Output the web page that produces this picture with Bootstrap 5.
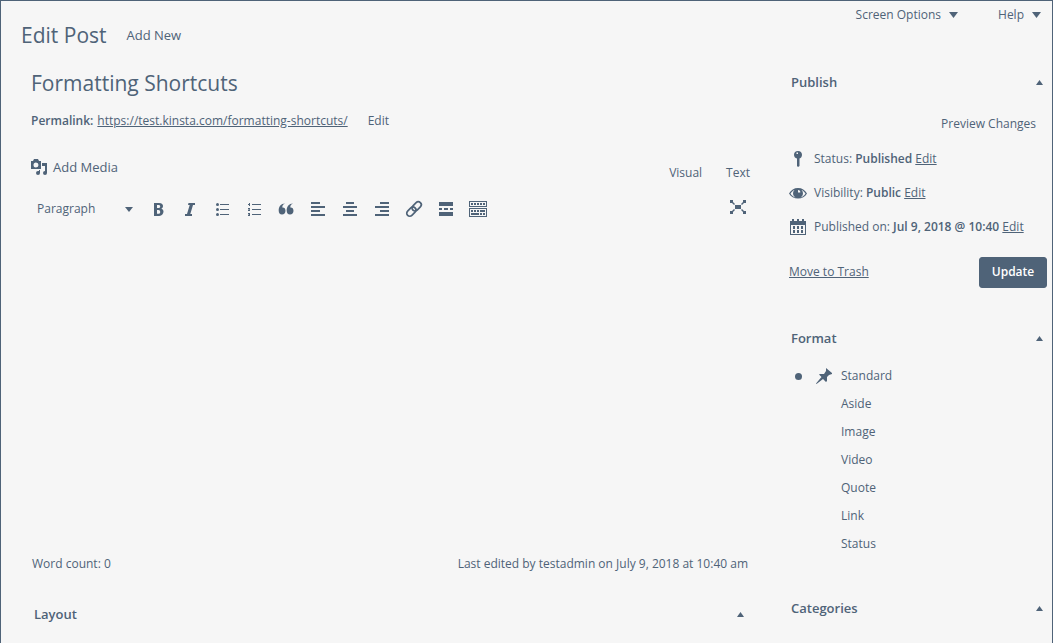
<!DOCTYPE html>
<html lang="en">
<head>
<meta charset="utf-8">
<meta name="viewport" content="width=device-width, initial-scale=1">
<title>Edit Post</title>
<link href="https://cdn.jsdelivr.net/npm/bootstrap@5.3.0/dist/css/bootstrap.min.css" rel="stylesheet">
<style>
  :root { --ink: #4f6378; --paper: #f6f6f6; }
  body { font-family: "Open Sans", "Noto Sans", sans-serif; font-size: 13px; line-height: 20px; color: var(--ink); background: var(--paper); }
  a, button, input, select, textarea { color: var(--ink); }
  a:hover { color: #2f4358; }
  svg { fill: currentColor; flex: none; display: block; }
  .frame { min-height: 100vh; border: 1px solid var(--ink); border-bottom: 0; }
  .plain { color: var(--ink); background: none; border: 0; padding: 0; }
  .page-head { height: 59px; padding: 0 11px 0 20px; }
  .page-head h1 { font-size: 21px; line-height: 28px; }
  .main-col { padding-left: 30px; min-width: 0; }
  .side-col { width: 263px; margin-left: 39px; padding-right: 5px; flex: none; }
  .title-field { font-size: 21px; line-height: 30px; height: 46px; outline: 0; }
  .permalink { height: 30px; }
  .small-text { font-size: 12px; }
  .media-row { height: 50px; padding-top: 12px; }
  .toolbar { height: 46px; padding-left: 6px; }
  .toolbar .tool { width: 20px; height: 20px; margin-right: 12px; }
  .format-select { width: 96px; margin-right: 15px; appearance: none; outline: 0; }
  .select-wrap { position: relative; }
  .select-wrap svg { position: absolute; right: 15px; top: 8px; pointer-events: none; }
  .editor { height: 316px; resize: none; outline: 0; }
  .status-bar { height: 32px; padding: 0 2px 0 1px; }
  .box-head { height: 44px; padding: 0 4px 0 2px; }
  .box-head h2 { font-size: 13px; line-height: 20px; font-weight: 600; }
  .layout-box { margin-top: 12px; padding: 0 6px 0 3px; }
  .preview { height: 38px; padding: 2px 11px 0 0; }
  .meta-row { height: 34px; }
  .meta-row svg { margin-right: 7px; }
  .publish-actions { height: 56px; }
  .update-btn { --bs-btn-color: #fff; --bs-btn-bg: var(--ink); --bs-btn-border-color: var(--ink); --bs-btn-hover-color: #fff; --bs-btn-hover-bg: #3d5166; --bs-btn-hover-border-color: #3d5166; height: 31px; width: 68px; font-size: 12px; font-weight: 600; line-height: 20px; padding: 0; border-radius: 3px; }
  .format-list { padding: 2px 0 28px 6px; }
  .format-list label { height: 28px; }
  .format-list input { appearance: none; width: 7px; height: 7px; margin: 0 13px 0 0; border-radius: 50%; }
  .format-list input:checked { background: var(--ink); }
  .format-icon { width: 26px; }
</style>
</head>
<body>
<div class="frame">
  <header class="page-head d-flex justify-content-between align-items-start">
    <div class="d-flex align-items-center pt-3 mt-1">
      <h1 class="fw-normal mb-0 me-3">Edit Post</h1>
      <a href="#" class="text-decoration-none ms-1">Add New</a>
    </div>
    <nav class="small-text d-flex pt-1">
      <button type="button" class="plain d-flex align-items-center gap-1 me-4">Screen Options
        <svg class="ms-1" width="9" height="6" viewBox="0 0 9 6"><path d="M0 0h9L4.500 6z"/></svg></button>
      <button type="button" class="plain d-flex align-items-center gap-1 ms-3">Help
        <svg class="ms-1" width="9" height="6" viewBox="0 0 9 6"><path d="M0 0h9L4.500 6z"/></svg></button>
    </nav>
  </header>

  <div class="d-flex">
    <main class="main-col flex-grow-1">
      <input class="plain title-field w-100" type="text" aria-label="Title" value="Formatting Shortcuts">
      <div class="permalink small-text d-flex align-items-center">
        <strong class="fw-semibold me-1">Permalink:</strong>
        <a href="#">https://test.kinsta.com/formatting-shortcuts/</a>
        <button type="button" class="plain ms-3 ps-1">Edit</button>
      </div>

      <div class="media-row d-flex justify-content-between align-items-center">
        <button type="button" class="plain d-flex align-items-center">
          <svg class="me-1" width="18" height="18" viewBox="0 0 18 18"><path fill-rule="evenodd" d="M0 3h2l1-2h4l1 2h2v8H0zM5 4.500a2.500 2.500 0 1 0 0 5 2.500 2.500 0 0 0 0-5z"/><path d="M11 5h5v10a2 2 0 1 1-2-2V8h-3zM8 12h1v3a2 2 0 1 1-2-2h1z"/></svg>
          Add Media
        </button>
        <div class="small-text d-flex gap-4 pt-2 mt-1">
          <button type="button" class="plain">Visual</button>
          <button type="button" class="plain">Text</button>
        </div>
      </div>

      <div class="toolbar d-flex align-items-center">
        <div class="select-wrap small-text">
          <select class="plain format-select" aria-label="Block format"><option>Paragraph</option><option>Heading 1</option></select>
          <svg width="8" height="5" viewBox="0 0 8 5"><path d="M0 0h8L4 5z"/></svg>
        </div>
        <button type="button" class="plain tool" aria-label="Bold"><svg width="20" height="20" viewBox="0 0 20 20"><path fill-rule="evenodd" d="M6 4h5c3 0 4 1.500 4 3s-.8 2.300-1.700 2.700c1.200.3 2.200 1.300 2.200 2.900 0 2.200-1.600 4.400-4.200 4.400H6zm3 2v3h1.500c1.200 0 1.700-.6 1.700-1.500S11.700 6 10.500 6zm0 5v3.800h1.500c1.200 0 1.700-.8 1.700-1.900s-.6-1.900-1.700-1.900z"/></svg></button>
        <button type="button" class="plain tool" aria-label="Italic"><svg width="20" height="20" viewBox="0 0 20 20"><path d="M8.500 4H15v2h-2l-2.700 9H12v2H5v-2h2L9.700 6H8z"/></svg></button>
        <button type="button" class="plain tool" aria-label="Bulleted list"><svg width="20" height="20" viewBox="0 0 20 20"><path d="M8 5h9v1H8zM8 10h9v1H8zM8 15h9v1H8z"/><circle cx="5.500" cy="5.500" r="1.500"/><circle cx="5.500" cy="10.500" r="1.500"/><circle cx="5.500" cy="15.500" r="1.500"/></svg></button>
        <button type="button" class="plain tool" aria-label="Numbered list"><svg width="20" height="20" viewBox="0 0 20 20"><path d="M8 5h9v1H8zM8 10h9v1H8zM8 15h9v1H8zM5 4h1v3H5zM4 5h1v1H4zM4 9h2v1.500L5 11h1v1H4v-1l1-1H4zM4 14h2v3H4v-1h1v-.500H4z"/></svg></button>
        <button type="button" class="plain tool" aria-label="Blockquote"><svg width="20" height="20" viewBox="0 0 20 20"><path d="M9 4.500c-2 .7-2.700 2.200-2.700 4 1.800-.3 3.200 1 3.200 3.200S8.200 15.600 6 15.600 2.700 14 2.700 11.500C2.700 7.500 5 4.500 9 4.500zM17 4.500c-2 .7-2.700 2.200-2.700 4 1.800-.3 3.200 1 3.200 3.200s-1.300 3.900-3.500 3.900-3.300-1.600-3.300-4.100c0-4 2.300-7 6.300-7z"/></svg></button>
        <button type="button" class="plain tool" aria-label="Align left"><svg width="20" height="20" viewBox="0 0 20 20"><path d="M3 3h9v2H3zM3 7h14v2H3zM3 11h9v2H3zM3 15h14v2H3z"/></svg></button>
        <button type="button" class="plain tool" aria-label="Align center"><svg width="20" height="20" viewBox="0 0 20 20"><path d="M6 3h8v2H6zM3 7h14v2H3zM6 11h8v2H6zM3 15h14v2H3z"/></svg></button>
        <button type="button" class="plain tool" aria-label="Align right"><svg width="20" height="20" viewBox="0 0 20 20"><path d="M8 3h9v2H8zM3 7h14v2H3zM8 11h9v2H8zM3 15h14v2H3z"/></svg></button>
        <button type="button" class="plain tool" aria-label="Insert link"><svg width="20" height="20" viewBox="0 0 20 20"><g transform="rotate(-45 10 10)" fill="none" stroke="currentColor" stroke-width="1.700"><rect x="1" y="7" width="10.500" height="6" rx="3"/><rect x="8.500" y="7" width="10.500" height="6" rx="3"/></g></svg></button>
        <button type="button" class="plain tool" aria-label="Read more"><svg width="20" height="20" viewBox="0 0 20 20"><path d="M3 3h14v4H3zM3 9h3v2H3zM8 9h4v2H8zM14 9h3v2h-3zM3 13h14v4H3z"/></svg></button>
        <button type="button" class="plain tool" aria-label="Toolbar toggle"><svg width="20" height="20" viewBox="0 0 20 20"><path fill-rule="evenodd" d="M1 2h18v6H1zm1 1v4h16V3zM1 9h18v9H1zm1 1v7h16v-7z"/><path d="M3 4h2v2H3zM6 4h2v2H6zM9 4h2v2H9zM12 4h2v2h-2zM15 4h2v2h-2zM3 11h2v2H3zM6 11h2v2H6zM9 11h2v2H9zM12 11h5v2h-5zM3 14h8v2H3zM12 14h2v2h-2zM15 14h2v2h-2z"/></svg></button>
        <button type="button" class="plain ms-auto pe-1 mb-1" aria-label="Distraction-free mode"><svg width="16" height="16" viewBox="0 0 16 16"><path d="M5 6h6v4H5zM0 1h3v2l2 2-1 1-2-2H0zM16 1h-3v2l-2 2 1 1 2-2h2zM0 15h3v-2l2-2-1-1-2 2H0zM16 15h-3v-2l-2-2 1-1 2 2h2z"/></svg></button>
      </div>

      <textarea class="plain editor w-100 d-block" aria-label="Post content"></textarea>
      <div class="status-bar small-text d-flex justify-content-between align-items-center">
        <span>Word count: 0</span>
        <span>Last edited by testadmin on July 9, 2018 at 10:40 am</span>
      </div>
      <section class="box-head layout-box d-flex justify-content-between align-items-center">
        <h2 class="mb-0">Layout</h2>
        <button type="button" class="plain" aria-label="Toggle Layout"><svg width="7" height="5" viewBox="0 0 7 5"><path d="M3.500 0 7 5H0z"/></svg></button>
      </section>
    </main>

    <aside class="side-col small-text">
      <section>
        <div class="box-head d-flex justify-content-between align-items-center">
          <h2 class="mb-0">Publish</h2>
          <button type="button" class="plain" aria-label="Toggle Publish"><svg width="7" height="5" viewBox="0 0 7 5"><path d="M3.500 0 7 5H0z"/></svg></button>
        </div>
        <div class="preview d-flex justify-content-end align-items-center"><button type="button" class="plain">Preview Changes</button></div>
        <div class="meta-row d-flex align-items-center">
          <svg width="18" height="16" viewBox="0 0 18 16"><path fill-rule="evenodd" d="M9 0c2.500 0 4 1.700 4 3.700S12 7 10.500 7.600V15L9 16l-1-1V7.600C6 7 5 5.700 5 3.700S6.500 0 9 0zM7.500 1.500v1.500H9V1.500z"/></svg>
          <span>Status: <b class="fw-semibold">Published</b> <a href="#">Edit</a></span>
        </div>
        <div class="meta-row d-flex align-items-center">
          <svg width="18" height="16" viewBox="0 0 18 16"><path fill-rule="evenodd" d="M0 8.500C2 5 5 3 9 3s7 2 9 5.500c-2 3.500-5 5-9 5s-7-1.500-9-5zm1.500 0C2.700 10.700 4.500 12 6.500 12.400A4.500 4.500 0 0 1 5.500 5C3.800 5.700 2.500 6.900 1.500 8.500zm11-3.500a4.500 4.500 0 0 1-1 7.400c2-.4 3.800-1.700 5-3.900-1-1.600-2.300-2.800-4-3.500zM9 5v2.500h2.300A2.300 2.300 0 0 0 9 5z"/></svg>
          <span>Visibility: <b class="fw-semibold">Public</b> <a href="#">Edit</a></span>
        </div>
        <div class="meta-row d-flex align-items-center">
          <svg width="18" height="16" viewBox="0 0 18 16"><path fill-rule="evenodd" d="M1 2h2V0h2v2h3V0h2v2h3V0h2v2h2v14H1zm1 4v9h14V6z"/><path d="M4 7h2v3H4zM8 7h2v3H8zM12 7h2v3h-2zM4 11h2v3H4zM8 11h2v3H8zM12 11h2v3h-2z"/></svg>
          <span class="text-nowrap">Published on: <b class="fw-semibold">Jul 9, 2018 @ 10:40</b> <a href="#">Edit</a></span>
        </div>
        <div class="publish-actions d-flex justify-content-between align-items-center">
          <a href="#">Move to Trash</a>
          <button type="submit" class="btn update-btn">Update</button>
        </div>
      </section>

      <section class="pt-3">
        <div class="box-head d-flex justify-content-between align-items-center">
          <h2 class="mb-0">Format</h2>
          <button type="button" class="plain" aria-label="Toggle Format"><svg width="7" height="5" viewBox="0 0 7 5"><path d="M3.500 0 7 5H0z"/></svg></button>
        </div>
        <div class="format-list">
          <label class="d-flex align-items-center"><input type="radio" name="format" checked><span class="format-icon"><svg width="18" height="18" viewBox="0 0 18 18"><path d="M11 1 17 6v1l-3 1-2 2v4l-1 1-3-3-6.500 5L1 16.500 6.500 10 4 7.500 5 7h4l2-3z"/></svg></span>Standard</label>
          <label class="d-flex align-items-center"><input type="radio" name="format"><span class="format-icon"></span>Aside</label>
          <label class="d-flex align-items-center"><input type="radio" name="format"><span class="format-icon"></span>Image</label>
          <label class="d-flex align-items-center"><input type="radio" name="format"><span class="format-icon"></span>Video</label>
          <label class="d-flex align-items-center"><input type="radio" name="format"><span class="format-icon"></span>Quote</label>
          <label class="d-flex align-items-center"><input type="radio" name="format"><span class="format-icon"></span>Link</label>
          <label class="d-flex align-items-center"><input type="radio" name="format"><span class="format-icon"></span>Status</label>
        </div>
      </section>

      <section class="box-head d-flex justify-content-between align-items-center">
        <h2 class="mb-0">Categories</h2>
        <button type="button" class="plain" aria-label="Toggle Categories"><svg width="7" height="5" viewBox="0 0 7 5"><path d="M3.500 0 7 5H0z"/></svg></button>
      </section>
    </aside>
  </div>
</div>
<script src="https://cdn.jsdelivr.net/npm/bootstrap@5.3.0/dist/js/bootstrap.bundle.min.js"></script>
</body>
</html>
